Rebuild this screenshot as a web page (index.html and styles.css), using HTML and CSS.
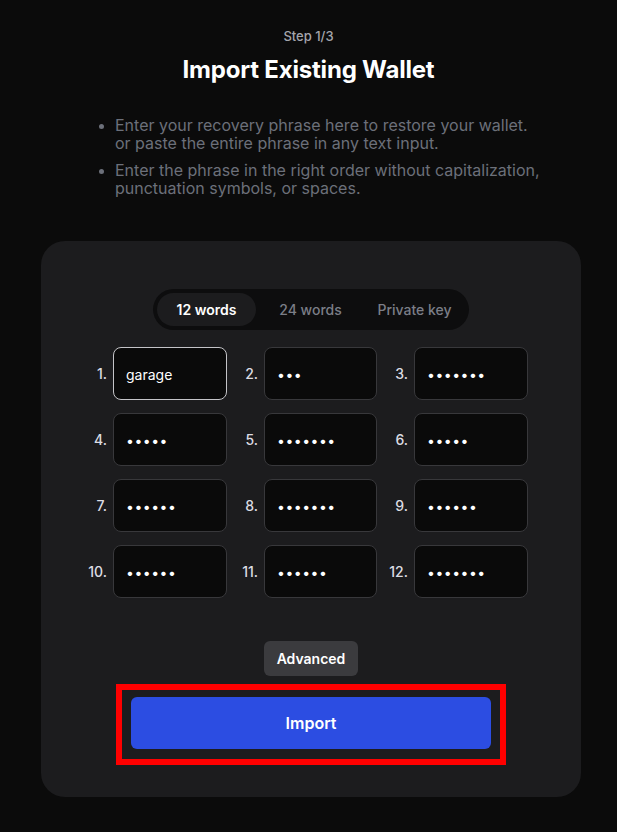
FILE: index.html
```html
<!DOCTYPE html>
<html lang="en">
<head>
<meta charset="utf-8">
<title>Import Existing Wallet</title>
<link rel="stylesheet" href="styles.css">
</head>
<body>
<main class="page">
  <header class="head">
    <div class="step">Step 1/3</div>
    <h1 class="title">Import Existing Wallet</h1>
  </header>
  <ul class="notes">
    <li>Enter your recovery phrase here to restore your wallet. or paste the entire phrase in any text input.</li>
    <li>Enter the phrase in the right order without capitalization, punctuation symbols, or spaces.</li>
  </ul>
  <section class="card">
    <div class="tabs">
      <button class="tab active">12 words</button>
      <button class="tab">24 words</button>
      <button class="tab">Private key</button>
    </div>
    <div class="words">
      <label class="cell"><span class="num">1.</span><input class="word focus" type="text" value="garage"></label>
      <label class="cell"><span class="num">2.</span><input class="word" type="password" value="abc"></label>
      <label class="cell"><span class="num">3.</span><input class="word" type="password" value="abcdefg"></label>
      <label class="cell"><span class="num">4.</span><input class="word" type="password" value="abcde"></label>
      <label class="cell"><span class="num">5.</span><input class="word" type="password" value="abcdefg"></label>
      <label class="cell"><span class="num">6.</span><input class="word" type="password" value="abcde"></label>
      <label class="cell"><span class="num">7.</span><input class="word" type="password" value="abcdef"></label>
      <label class="cell"><span class="num">8.</span><input class="word" type="password" value="abcdefg"></label>
      <label class="cell"><span class="num">9.</span><input class="word" type="password" value="abcdef"></label>
      <label class="cell"><span class="num">10.</span><input class="word" type="password" value="abcdef"></label>
      <label class="cell"><span class="num">11.</span><input class="word" type="password" value="abcdef"></label>
      <label class="cell"><span class="num">12.</span><input class="word" type="password" value="abcdefg"></label>
    </div>
    <div class="actions">
      <button class="advanced">Advanced</button>
      <div class="highlight">
        <button class="import">Import</button>
      </div>
    </div>
  </section>
</main>
</body>
</html>
```

FILE: styles.css
```css
* { box-sizing: border-box; }
html, body {
  margin: 0;
  padding: 0;
  background: #0b0b0b;
}
body {
  font-family: Inter, "Noto Sans", "Liberation Sans", sans-serif;
  color: #ffffff;
  width: 617px;
  min-height: 832px;
}
.page {
  display: flex;
  flex-direction: column;
  align-items: center;
  padding-top: 28px;
}
.head {
  display: flex;
  flex-direction: column;
  align-items: center;
}
.step {
  font-size: 13px;
  line-height: 16px;
  font-weight: 500;
  color: #a5a6ad;
}
.title {
  margin: 11px 0 0;
  font-size: 24px;
  line-height: 30px;
  font-weight: 700;
  color: #ffffff;
  letter-spacing: -0.2px;
}
.notes {
  align-self: flex-start;
  margin: 31px 0 0 100px;
  padding: 0 0 0 15px;
  width: 445px;
  color: #6c707a;
  font-size: 16px;
  line-height: 18px;
}
.notes li { margin-bottom: 9px; }
.notes li:last-child { margin-bottom: 0; }
.notes li::marker { color: #6c707a; font-size: 14px; }

.card {
  margin: 44px 0 0 5px;
  width: 540px;
  background: #1c1c1e;
  border-radius: 24px;
  padding: 48px 0 32px;
  display: flex;
  flex-direction: column;
  align-items: center;
}
.tabs {
  display: grid;
  grid-template-columns: repeat(3, 99px);
  column-gap: 5px;
  padding: 4px 5px 4px 4px;
  background: #0d0d0e;
  border-radius: 21px;
}
.tab {
  height: 33px;
  border: 0;
  border-radius: 17px;
  background: transparent;
  font-family: inherit;
  font-size: 14px;
  font-weight: 500;
  color: #7b7e87;
  cursor: pointer;
}
.tab.active {
  background: #1c1c1e;
  color: #ffffff;
  font-weight: 600;
}
.words {
  align-self: flex-start;
  margin: 17px 0 0 35px;
  display: grid;
  grid-template-columns: 151px 150px 151px;
  row-gap: 13px;
}
.cell {
  display: flex;
  align-items: center;
}
.num {
  width: 31px;
  margin-right: 6px;
  text-align: right;
  font-size: 14px;
  font-weight: 500;
  color: #dcdde3;
}
.word {
  width: 114px;
  height: 53px;
  background: #0a0a0a;
  border: 1px solid #38383b;
  border-radius: 8px;
  padding: 1px 12px 0;
  font-family: inherit;
  font-size: 14px;
  color: #ffffff;
  outline: none;
}
.cell:nth-child(3n+2) .word { width: 113px; }
.word[type="password"] { letter-spacing: 0.5px; font-size: 14px; }
.word.focus { border-color: #c4c4c8; }

.actions {
  margin-top: 43px;
  display: flex;
  flex-direction: column;
  align-items: center;
  gap: 8px;
}
.advanced {
  height: 35px;
  padding: 0 13px;
  border: 0;
  border-radius: 6px;
  background: #3b3b3e;
  font-family: inherit;
  font-size: 14px;
  font-weight: 600;
  color: #ffffff;
}
.highlight {
  width: 390px;
  border: 6px solid #ff0000;
  padding: 7px 9px 10px;
}
.import {
  display: block;
  width: 100%;
  height: 52px;
  border: 0;
  border-radius: 6px;
  background: #2c4de2;
  font-family: inherit;
  font-size: 16px;
  font-weight: 600;
  color: #ffffff;
}
```
